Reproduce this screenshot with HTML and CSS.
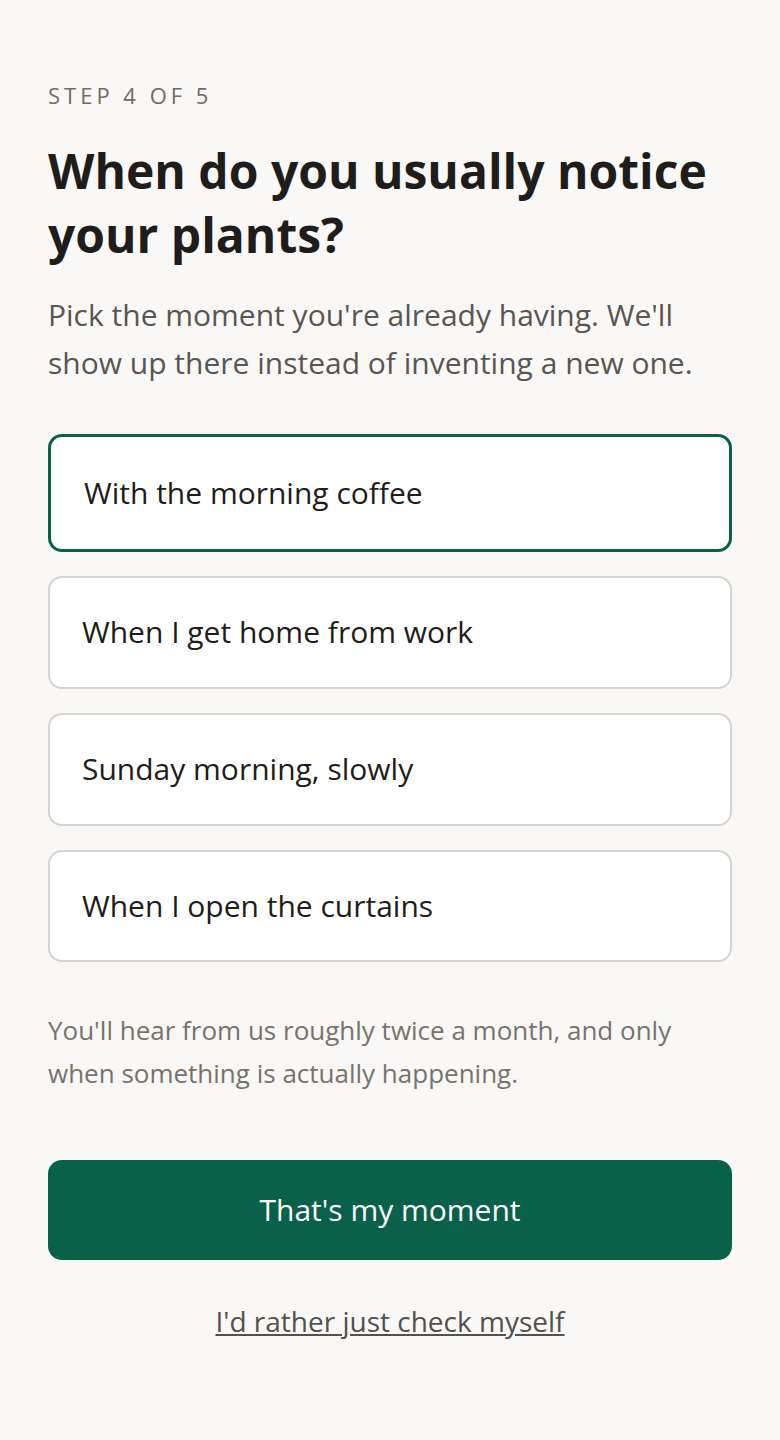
FILE: index.html
```html
<!DOCTYPE html>
<html lang="en">
<head>
<meta charset="utf-8">
<title>Step 4 of 5</title>
<link rel="stylesheet" href="styles.css">
</head>
<body>
<main class="screen">
  <p class="step">Step 4 of 5</p>
  <h1 class="title">When do you usually notice your plants?</h1>
  <p class="lead">Pick the moment you're already having. We'll show up there instead of inventing a new one.</p>
  <div class="options">
    <button class="option is-selected" type="button">With the morning coffee</button>
    <button class="option" type="button">When I get home from work</button>
    <button class="option" type="button">Sunday morning, slowly</button>
    <button class="option" type="button">When I open the curtains</button>
  </div>
  <p class="note">You'll hear from us roughly twice a month, and only when something is actually happening.</p>
  <button class="primary" type="button">That's my moment</button>
  <a class="skip" href="#">I'd rather just check myself</a>
</main>
</body>
</html>
```
FILE: styles.css
```css
* { box-sizing: border-box; }
html, body { margin: 0; padding: 0; }
body {
  background: #f9f8f6;
  font-family: "Open Sans", "Noto Sans", sans-serif;
  color: #1f1c1a;
}
.screen {
  display: flex;
  flex-direction: column;
  padding: 81px 48px 60px;
}
.step {
  margin: 0;
  font-size: 22px;
  line-height: 28px;
  letter-spacing: 4px;
  text-transform: uppercase;
  color: #6f6b66;
}
.title {
  margin: 30px 0 0;
  font-size: 48px;
  line-height: 64.4px;
  font-weight: 700;
  color: #1f1c1a;
}
.lead {
  margin: 23px 0 0;
  font-size: 30px;
  line-height: 48px;
  color: #5a5550;
}
.options {
  margin-top: 47px;
  display: flex;
  flex-direction: column;
  gap: 24px;
}
.option {
  display: block;
  width: 100%;
  text-align: left;
  font-family: inherit;
  font-size: 30px;
  line-height: 40.6px;
  color: #1f1c1a;
  background: #ffffff;
  border: 2px solid #d7d4d0;
  border-radius: 14px;
  padding: 34px 32px;
}
.option.is-selected {
  border: 3px solid #0a614a;
  padding: 36px 33px;
}
.note {
  margin: 47px 0 0;
  font-size: 26px;
  line-height: 43.2px;
  color: #78726b;
}
.primary {
  margin-top: 64.5px;
  width: 100%;
  font-family: inherit;
  font-size: 30px;
  line-height: 40.6px;
  padding: 29.5px 20px;
  color: #ffffff;
  background: #0a614a;
  border: 0;
  border-radius: 14px;
}
.skip {
  margin-top: 41px;
  align-self: center;
  font-size: 28px;
  line-height: 40.6px;
  color: #54504b;
  text-decoration: underline;
  text-underline-offset: 2px;
}
```
